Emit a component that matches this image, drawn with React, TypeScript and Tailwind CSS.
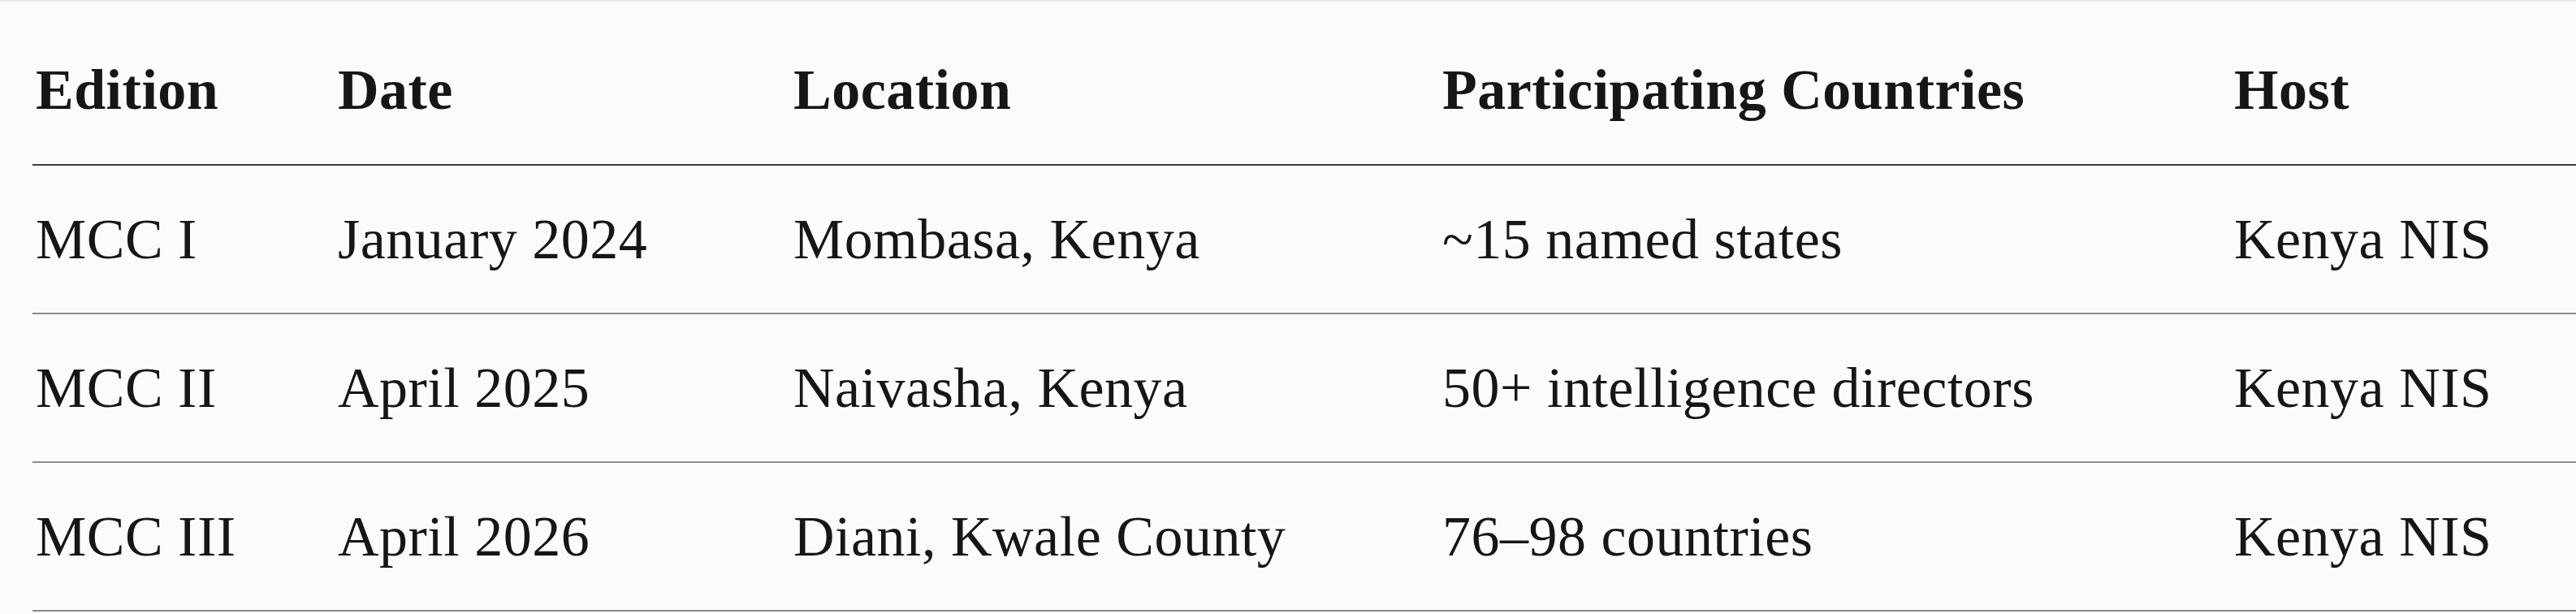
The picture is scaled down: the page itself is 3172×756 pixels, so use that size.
import React from "react"

interface Summit {
    edition: string
    date: string
    location: string
    countries: string
    host: string
}

const summits: Summit[] = [
    { edition: "MCC I", date: "January 2024", location: "Mombasa, Kenya", countries: "~15 named states", host: "Kenya NIS" },
    { edition: "MCC II", date: "April 2025", location: "Naivasha, Kenya", countries: "50+ intelligence directors", host: "Kenya NIS" },
    { edition: "MCC III", date: "April 2026", location: "Diani, Kwale County", countries: "76–98 countries", host: "Kenya NIS" },
]

export default function App() {
    const cell = "px-[4px] text-left align-middle"

    return (
        <div className="min-h-[756px] w-full bg-[#fbfbf9] border-t-2 border-[#ececea] pl-[40px] text-[#161616] font-['Liberation_Serif',Tinos,serif] text-[70px] leading-none tracking-[0.5px]">
            <table className="w-full table-fixed border-collapse">
                <thead>
                    <tr className="h-[201px] border-b-2 border-[#3d3d3b]">
                        <th className={`${cell} w-[372px] pt-[18px] font-bold`}>Edition</th>
                        <th className={`${cell} w-[561px] pt-[18px] font-bold`}>Date</th>
                        <th className={`${cell} w-[799px] pt-[18px] font-bold`}>Location</th>
                        <th className={`${cell} w-[975px] pt-[18px] font-bold`}>Participating Countries</th>
                        <th className={`${cell} pt-[18px] font-bold`}>Host</th>
                    </tr>
                </thead>
                <tbody>
                    {summits.map(s => (
                        <tr key={s.edition} className="h-[183px] border-b-2 border-[#8c8c89]">
                            <td className={cell}>{s.edition}</td>
                            <td className={cell}>{s.date}</td>
                            <td className={cell}>{s.location}</td>
                            <td className={cell}>{s.countries}</td>
                            <td className={cell}>{s.host}</td>
                        </tr>
                    ))}
                </tbody>
            </table>
        </div>
    )
}
